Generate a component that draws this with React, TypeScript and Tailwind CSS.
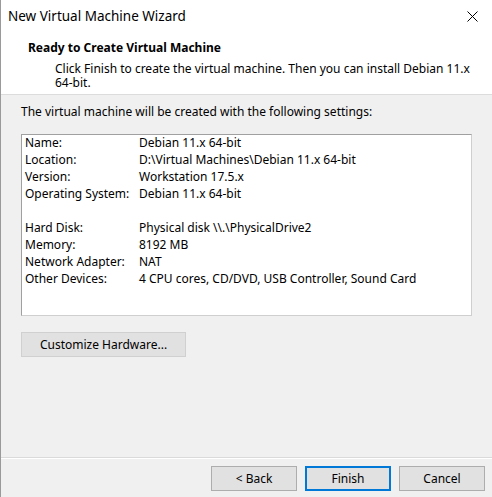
import React from "react";

const rows: [string, string][] = [
  ["Name:", "Debian 11.x 64-bit"],
  ["Location:", "D:\\Virtual Machines\\Debian 11.x 64-bit"],
  ["Version:", "Workstation 17.5.x"],
  ["Operating System:", "Debian 11.x 64-bit"],
  ["", ""],
  ["Hard Disk:", "Physical disk \\\\.\\PhysicalDrive2"],
  ["Memory:", "8192 MB"],
  ["Network Adapter:", "NAT"],
  ["Other Devices:", "4 CPU cores, CD/DVD, USB Controller, Sound Card"],
];

function WinButton({ label, primary }: { label: string; primary?: boolean }) {
  return (
    <button
      className={
        "w-[86px] h-[25px] bg-[#e1e1e1] text-[12px] text-black " +
        (primary ? "border-2 border-[#0078d7]" : "border border-[#adadad]")
      }
    >
      {label}
    </button>
  );
}

export default function App() {
  return (
    <div
      className="w-[492px] h-[497px] flex flex-col bg-[#f0f0f0] border-l border-[#9a9a9a] text-black overflow-hidden"
      style={{ fontFamily: '"Noto Sans", "Open Sans", sans-serif' }}
    >
      {/* title bar + header */}
      <div className="bg-white border-b border-[#dcdcdc]">
        <div className="h-[32px] flex items-center justify-between pl-[7px] pr-[14px]">
          <span className="text-[13.5px]">New Virtual Machine Wizard</span>
          <svg width="11" height="11" viewBox="0 0 11 11" className="text-black">
            <path d="M0.5 0.5 L10.5 10.5 M10.5 0.5 L0.5 10.5" stroke="currentColor" strokeWidth="1" />
          </svg>
        </div>
        <div className="pl-[27px] pt-[8px] pb-[4px] text-[12px]">
          <div className="font-bold leading-[16px]">Ready to Create Virtual Machine</div>
          <div className="pl-[27px] pr-[8px] leading-[14px] mt-[6px]">
            Click Finish to create the virtual machine. Then you can install Debian 11.x 64-bit.
          </div>
        </div>
      </div>

      {/* body */}
      <div className="flex-1 flex flex-col px-[20px] text-[12px]">
        <div className="mt-[9px] leading-[16px]">The virtual machine will be created with the following settings:</div>
        <div className="mt-[14px] h-[182px] bg-white border border-t-[#a0a0a0] border-l-[#a0a0a0] border-r-[#cfcfcf] border-b-[#cfcfcf] pl-[3px]">
          <div className="-mt-[1px]">
            {rows.map(([k, v], i) => (
              <div key={i} className="flex h-[17px] items-center">
                <span className="w-[114px] shrink-0">{k}</span>
                <span>{v}</span>
              </div>
            ))}
          </div>
        </div>
        <div className="mt-[16px]">
          <button className="w-[165px] h-[25px] bg-[#e1e1e1] border border-[#d0d0d0] text-[12px]">
            Customize Hardware...
          </button>
        </div>
      </div>

      {/* footer */}
      <div className="border-t border-[#dadada]">
        <div className="border-t border-white h-[39px] flex items-start justify-end gap-[8px] pr-[7px] pt-[7px]">
          <WinButton label="< Back" />
          <WinButton label="Finish" primary />
          <WinButton label="Cancel" />
        </div>
      </div>
    </div>
  );
}
